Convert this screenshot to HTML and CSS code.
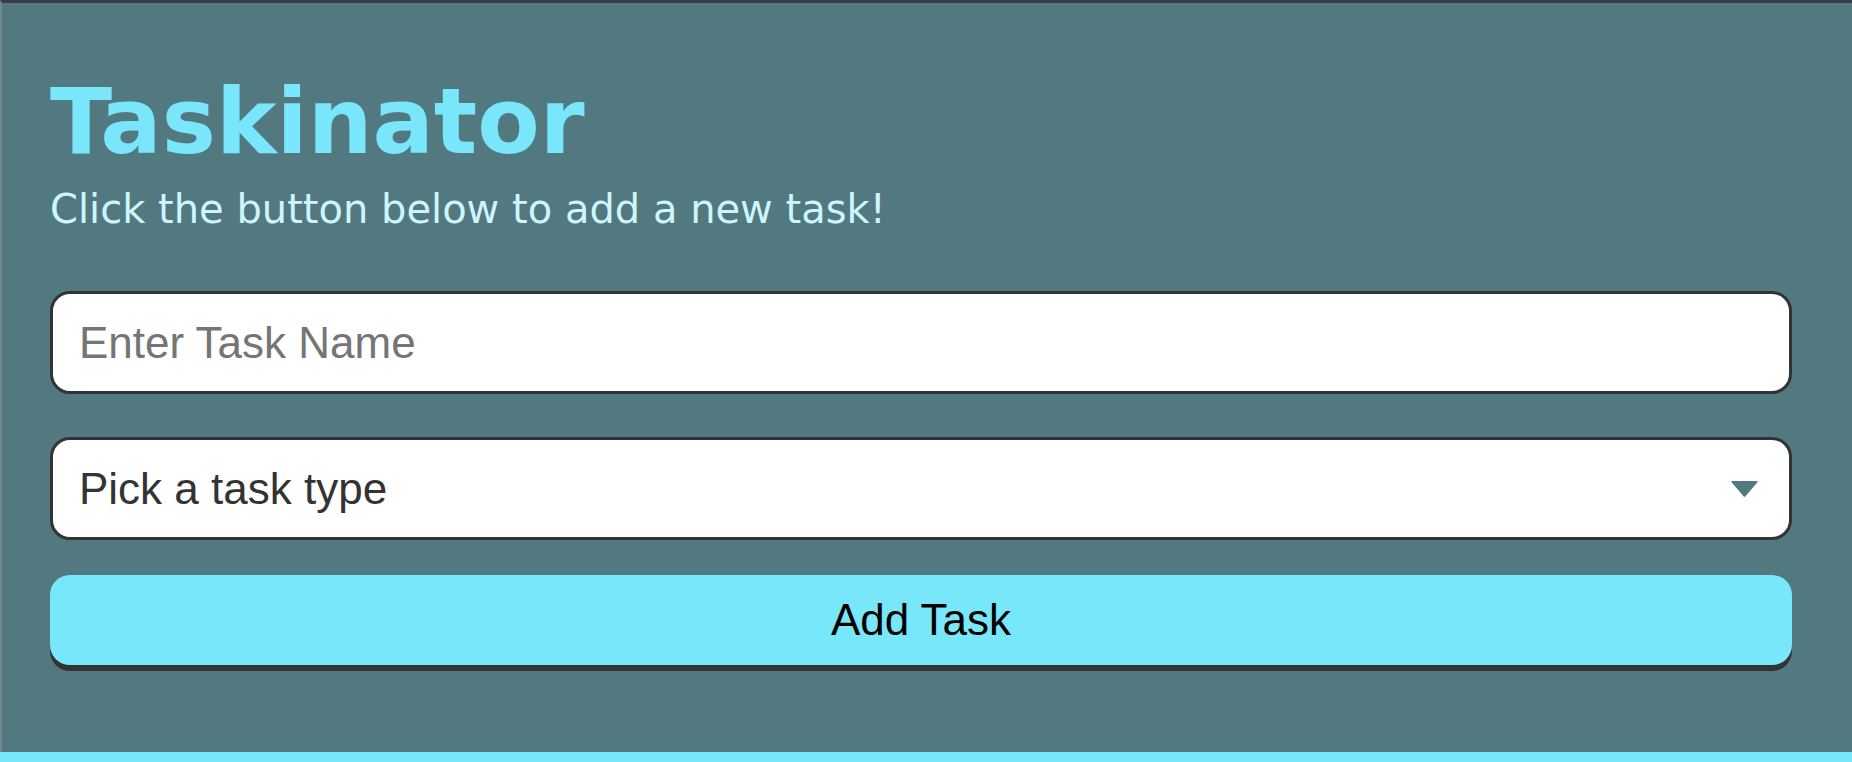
FILE: index.html
```html
<!DOCTYPE html>
<html lang="en">
<head>
<meta charset="utf-8">
<title>Taskinator</title>
<link rel="stylesheet" href="styles.css">
</head>
<body>
<div class="app">
  <header class="page-header">
    <h1 class="title">Taskinator</h1>
    <p class="subtitle">Click the button below to add a new task!</p>
  </header>
  <form class="task-form">
    <input class="task-input" type="text" name="task-name" placeholder="Enter Task Name">
    <div class="select-wrap">
      <select class="task-select" name="task-type">
        <option value="" selected disabled>Pick a task type</option>
        <option value="Education">Education</option>
        <option value="Personal">Personal</option>
        <option value="Work">Work</option>
      </select>
      <svg class="select-arrow" viewBox="0 0 29 17" width="29" height="17" aria-hidden="true">
        <path d="M2.5 0.5 H26.5 Q28.5 0.5 27.2 2 L15.5 15.8 Q14.5 16.8 13.5 15.8 L1.8 2 Q0.5 0.5 2.5 0.5 Z" fill="#527880"/>
      </svg>
    </div>
    <button class="add-btn" type="submit">Add Task</button>
  </form>
</div>
<footer class="footer-strip"></footer>
</body>
</html>
```

FILE: styles.css
```css
* {
  box-sizing: border-box;
}

html, body {
  margin: 0;
  padding: 0;
}

body {
  background: #527880;
  overflow: hidden;
}

.app {
  height: 752px;
  border-top: 3px solid #3c3d44;
  border-left: 2px solid #74898e;
  padding: 74px 60px 0 48px;
  background: #527880;
}

.page-header {
  display: flex;
  flex-direction: column;
}

.title {
  margin: 0;
  font-family: "DejaVu Sans", Verdana, sans-serif;
  font-weight: bold;
  font-size: 91px;
  line-height: 90px;
  color: #7ae6fb;
}

.subtitle {
  margin: 18px 0 0;
  font-family: "DejaVu Sans", Verdana, sans-serif;
  font-size: 40px;
  line-height: 48px;
  color: #cdf5fc;
}

.task-form {
  display: flex;
  flex-direction: column;
  margin-top: 58px;
}

.task-input,
.task-select {
  width: 100%;
  height: 103px;
  border: 3px solid #333333;
  border-radius: 20px;
  background: #ffffff;
  padding: 0 26px;
  font-family: "Liberation Sans", Arial, sans-serif;
  font-size: 44px;
  outline: none;
}

.task-input {
  color: #333333;
}

.task-input::placeholder {
  color: #757575;
}

.select-wrap {
  position: relative;
  margin-top: 43px;
}

.task-select {
  display: block;
  appearance: none;
  -webkit-appearance: none;
  color: #333333;
}

.select-arrow {
  position: absolute;
  right: 33px;
  top: 50%;
  transform: translateY(-50%);
  pointer-events: none;
}

.add-btn {
  margin-top: 35px;
  width: 100%;
  height: 90px;
  border: none;
  border-radius: 20px;
  background: #78e7fa;
  box-shadow: 0 6px 0 #333333;
  font-family: "Liberation Sans", Arial, sans-serif;
  font-size: 44px;
  color: #000000;
  cursor: pointer;
}

.footer-strip {
  height: 10px;
  background: #78e7fa;
}
```
